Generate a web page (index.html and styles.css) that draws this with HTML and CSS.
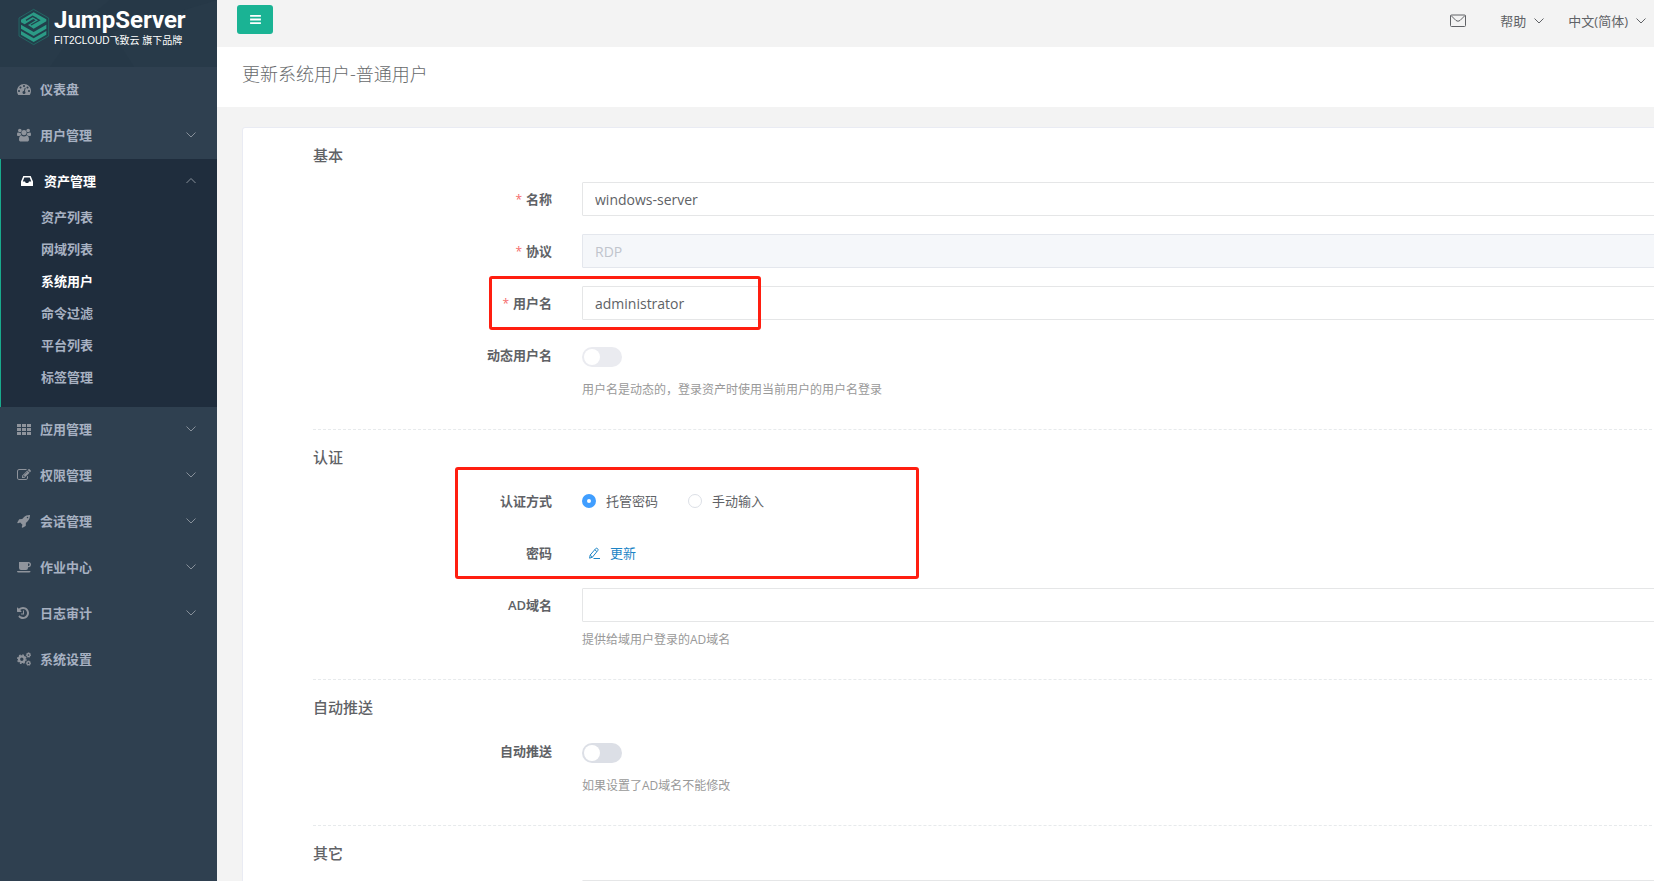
FILE: index.html
```html
<!DOCTYPE html>
<html lang="zh-CN">
<head>
<meta charset="utf-8">
<title>JumpServer</title>
<link rel="stylesheet" href="styles.css">
</head>
<body>
<svg class="defs" aria-hidden="true">
  <symbol id="down" viewBox="0 0 12 12"><path d="M1.500 3.500 6 8 10.500 3.500" fill="none" stroke="currentColor"/></symbol>
  <symbol id="up" viewBox="0 0 12 12"><path d="M1.500 8 6 3.500 10.500 8" fill="none" stroke="currentColor"/></symbol>
</svg>
<div class="app">
  <aside class="sidebar">
    <a class="brand" href="#">
      <svg class="brand-pattern" viewBox="0 0 217 67" preserveAspectRatio="none" aria-hidden="true"><path d="M0 0H110L80 24 50 67H0z" fill="#283a49"/><path d="M112 32 217 0V67H134z" fill="#283a49"/></svg>
      <svg class="brand-mark" viewBox="54 24 96 114" aria-hidden="true">
        <path d="M101 28 146 54V108L101 134 57 108V54z" fill="#223f4b" stroke="#24786f" stroke-width="2"/>
        <path d="M101 37 63 59V67L74 73 100 57 107 61 84 75 101 86 139 64V58z" fill="#2b9b86"/>
        <path d="M78 61 98 49 109 55" fill="none" stroke="#223f4b" stroke-width="4"/>
        <path d="M93 75 118 61 107 54" fill="none" stroke="#223f4b" stroke-width="4"/>
        <path d="M63 74 101 96 139 74V86L101 108 63 86z" fill="#2b9b86"/>
        <path d="M63 93 101 115 139 93V104L101 126 63 104z" fill="#2b9b86"/>
      </svg>
      <span class="brand-text"><strong class="brand-name">JumpServer</strong><span class="brand-sub">FIT2CLOUD飞致云 旗下品牌</span></span>
    </a>
    <nav class="menu">
      <a class="item" href="#"><svg class="icon" viewBox="0 0 1792 1792"><path d="M384 1152q0-53-37.500-90.500t-90.500-37.500-90.500 37.500-37.500 90.500 37.500 90.500 90.500 37.500 90.500-37.500 37.500-90.500zm192-448q0-53-37.500-90.500t-90.500-37.500-90.500 37.500-37.500 90.500 37.500 90.500 90.500 37.500 90.500-37.500 37.500-90.500zm428 481l101-382q6-26-7.500-48.500t-38.500-29.500-48 6.500-30 39.500l-101 382q-60 5-107 43.500t-63 98.500q-20 77 20 146t117 89 146-20 89-117q16-60-6-117t-72-91zm660-33q0-53-37.500-90.500t-90.500-37.500-90.500 37.500-37.500 90.500 37.500 90.500 90.500 37.500 90.500-37.500 37.500-90.500zm-640-640q0-53-37.500-90.500t-90.500-37.500-90.500 37.500-37.500 90.500 37.500 90.500 90.500 37.500 90.500-37.500 37.500-90.500zm448 192q0-53-37.500-90.500t-90.500-37.500-90.500 37.500-37.500 90.500 37.500 90.500 90.500 37.500 90.500-37.500 37.500-90.500zm320 448q0 261-141 483-19 29-54 29h-1402q-35 0-54-29-141-221-141-483 0-182 71-348t191-286 286-191 348-71 348 71 286 191 191 286 71 348z"/></svg><span class="name">仪表盘</span></a>
      <a class="item" href="#"><svg class="icon" viewBox="0 0 14 14"><circle cx="2.800" cy="2.500" r="1.800"/><circle cx="11.200" cy="2.500" r="1.800"/><circle cx="7" cy="4.600" r="2.600"/><path d="M0 6.500C0 5 .6 4.400 1.300 4.600 2.200 5.100 3 5.100 3.700 4.800 3.700 6 4 6.600 4.500 7.200 3.400 7.200 2.800 7.600 2.400 8H1.200C.4 8 0 7.500 0 6.500zM14 6.500C14 5 13.400 4.400 12.700 4.600 11.800 5.100 11 5.100 10.300 4.800 10.300 6 10 6.600 9.500 7.200 10.600 7.200 11.200 7.600 11.600 8H12.800C13.600 8 14 7.500 14 6.500zM2 11.500C2 9 3 7.500 4.500 7.500 6 8.700 8 8.700 9.500 7.500 11 7.500 12 9 12 11.500 12 13 11.200 13.500 10.200 13.500H3.800C2.800 13.500 2 13 2 11.500z"/></svg><span class="name">用户管理</span><svg class="caret"><use href="#down"/></svg></a>
      <div class="group">
        <a class="item item-open" href="#"><svg class="icon" viewBox="0 0 14 14"><path fill-rule="evenodd" d="M3.300 2H10.700L13 7.500V11.500Q13 12 12.500 12H1.500Q1 12 1 11.500V7.500zM4.300 3.500 2.800 7.500H5L5.800 9H8.200L9 7.500H11.200L9.700 3.500z"/></svg><span class="name">资产管理</span><svg class="caret"><use href="#up"/></svg></a>
        <div class="submenu">
          <a href="#">资产列表</a>
          <a href="#">网域列表</a>
          <a href="#" class="current">系统用户</a>
          <a href="#">命令过滤</a>
          <a href="#">平台列表</a>
          <a href="#">标签管理</a>
        </div>
      </div>
      <a class="item" href="#"><svg class="icon" viewBox="0 0 14 14"><path d="M0 2H4V5H0zM5 2H9V5H5zM10 2H14V5H10zM0 6H4V9H0zM5 6H9V9H5zM10 6H14V9H10zM0 10H4V13H0zM5 10H9V13H5zM10 10H14V13H10z"/></svg><span class="name">应用管理</span><svg class="caret"><use href="#down"/></svg></a>
      <a class="item" href="#"><svg class="icon" viewBox="0 0 1792 1792"><path d="M888 1184l116-116-152-152-116 116v56h96v96h56zm440-720q-16-16-33 1l-350 350q-17 17-1 33t33-1l350-350q17-17 1-33zm80 594v190q0 119-84.500 203.500t-203.500 84.500h-832q-119 0-203.500-84.500t-84.500-203.500v-832q0-119 84.500-203.500t203.500-84.500h832q63 0 117 25 15 7 18 23 3 17-9 29l-49 49q-14 14-32 8-23-6-45-6h-832q-66 0-113 47t-47 113v832q0 66 47 113t113 47h832q66 0 113-47t47-113v-126q0-13 9-22l64-64q15-15 35-7t20 29zm-96-738l288 288-672 672h-288v-288zm444 132l-92 92-288-288 92-92q28-28 68-28t68 28l152 152q28 28 28 68t-28 68z"/></svg><span class="name">权限管理</span><svg class="caret"><use href="#down"/></svg></a>
      <a class="item" href="#"><svg class="icon" viewBox="0 0 1792 1792"><path d="M1440 448q0-40-28-68t-68-28-68 28-28 68 28 68 68 28 68-28 28-68zm224-288q0 249-75.500 430.500t-253.500 360.500q-81 80-195 176l-20 379q-2 16-16 26l-384 224q-7 4-16 4-12 0-23-9l-64-64q-13-14-8-32l85-276-281-281-276 85q-3 1-9 1-14 0-23-9l-64-64q-17-19-5-39l224-384q10-14 26-16l379-20q96-114 176-195 188-187 358-258t431-71q14 0 24 9.500t10 22.500z"/></svg><span class="name">会话管理</span><svg class="caret"><use href="#down"/></svg></a>
      <a class="item" href="#"><svg class="icon" viewBox="0 0 14 14"><path fill-rule="evenodd" d="M2 2H11.500C13 2 14 3 14 4.600S13 7.300 11.500 7.300H11V8Q11 10 9 10H4Q2 10 2 8zM11 3.400V5.900H11.500C12.200 5.900 12.600 5.400 12.600 4.600S12.200 3.400 11.500 3.400zM0 11H13.500Q13.500 12.500 12 12.500H1.500Q0 12.500 0 11z"/></svg><span class="name">作业中心</span><svg class="caret"><use href="#down"/></svg></a>
      <a class="item" href="#"><svg class="icon" viewBox="128 0 1792 1792"><path d="M1664 896q0 156-61 298t-164 245-245 164-298 61q-172 0-327-72.500t-264-204.500q-7-10-6.500-22.500t8.500-20.500l137-138q10-9 25-9 16 2 23 12 73 95 179 147t225 52q104 0 198.500-40.500t163.500-109.500 109.500-163.500 40.500-198.500-40.500-198.500-109.500-163.500-163.500-109.500-198.500-40.500q-98 0-188 35.500t-160 101.500l137 138q31 30 14 69-17 40-59 40h-448q-26 0-45-19t-19-45v-448q0-42 40-59 39-17 69 14l130 129q107-101 244.500-156.500t284.500-55.500q156 0 298 61t245 164 164 245 61 298zm-640-288v448q0 14-9 23t-23 9h-320q-14 0-23-9t-9-23v-64q0-14 9-23t23-9h224v-352q0-14 9-23t23-9h64q14 0 23 9t9 23z"/></svg><span class="name">日志审计</span><svg class="caret"><use href="#down"/></svg></a>
      <a class="item" href="#"><svg class="icon" viewBox="0 0 14 14"><g fill="none" stroke="currentColor"><circle cx="4.800" cy="7.200" r="2.800" stroke-width="2.200"/><circle cx="4.800" cy="7.200" r="4.200" stroke-width="1.400" stroke-dasharray="1.700 1.600"/><circle cx="11.500" cy="3" r="1.500" stroke-width="1.300"/><circle cx="11.500" cy="3" r="2.200" stroke-width=".9" stroke-dasharray="1 .73"/><circle cx="11.500" cy="11.200" r="1.500" stroke-width="1.300"/><circle cx="11.500" cy="11.200" r="2.200" stroke-width=".9" stroke-dasharray="1 .73"/></g></svg><span class="name">系统设置</span></a>
    </nav>
  </aside>
  <div class="page">
    <header class="topbar">
      <button class="toggle" type="button" aria-label="菜单"><svg viewBox="0 0 12 10" aria-hidden="true"><path d="M0 0H12V2H0zM0 4H12V6H0zM0 8H12V10H0z"/></svg></button>
      <div class="tools">
        <button class="tool mail" type="button" aria-label="消息"><svg viewBox="0 0 18 14" aria-hidden="true"><rect x="1.500" y="1" width="15" height="11.500" rx="1" fill="none" stroke="currentColor"/><path d="M2 1.500 7 6.500Q9 8 11 6.500L16 1.500" fill="none" stroke="currentColor"/></svg></button>
        <button class="tool help-menu" type="button">帮助<svg class="drop"><use href="#down"/></svg></button>
        <button class="tool" type="button">中文(简体)<svg class="drop"><use href="#down"/></svg></button>
      </div>
    </header>
    <div class="heading"><h1>更新系统用户-普通用户</h1></div>
    <main class="content">
      <form class="card">
        <section class="section">
          <h2>基本</h2>
          <div class="row"><label class="label required" for="name">名称</label><input class="field" id="name" type="text" value="windows-server"></div>
          <div class="row"><label class="label required" for="protocol">协议</label><input class="field" id="protocol" type="text" value="RDP" disabled></div>
          <div class="row"><label class="label required" for="username">用户名</label><input class="field" id="username" type="text" value="administrator"><span class="mark mark-user"></span></div>
          <div class="row"><label class="label" for="dynamic">动态用户名</label><input class="switch" id="dynamic" type="checkbox" disabled></div>
          <p class="hint">用户名是动态的，登录资产时使用当前用户的用户名登录</p>
        </section>
        <section class="section">
          <h2>认证</h2>
          <div class="marked">
            <div class="row"><span class="label" id="mode">认证方式</span><div class="radios" role="radiogroup" aria-labelledby="mode"><label class="radio"><input type="radio" name="mode" checked>托管密码</label><label class="radio"><input type="radio" name="mode">手动输入</label></div></div>
            <div class="row"><span class="label">密码</span><a class="update" href="#"><svg viewBox="0 0 13 13" aria-hidden="true"><path d="M2.200 8 7.700 1.600Q8.500 .8 9.500 1.600 10.500 2.500 9.800 3.500L4.400 10.200 1.600 11.200zM6.800 2.700 8.900 4.600M2.200 8 4.400 10.200M5.500 11.500H12" fill="none" stroke="currentColor"/></svg>更新</a></div>
            <span class="mark mark-auth"></span>
          </div>
          <div class="row"><label class="label" for="domain">AD域名</label><input class="field" id="domain" type="text"></div>
          <p class="hint">提供给域用户登录的AD域名</p>
        </section>
        <section class="section">
          <h2>自动推送</h2>
          <div class="row"><label class="label" for="push">自动推送</label><input class="switch" id="push" type="checkbox"></div>
          <p class="hint">如果设置了AD域名不能修改</p>
        </section>
        <section class="section">
          <h2>其它</h2>
          <div class="row"><span class="label"></span><input class="field" type="text" aria-label="其它"></div>
        </section>
      </form>
    </main>
  </div>
</div>
</body>
</html>
```
FILE: styles.css
```css
* { box-sizing: border-box; }
body {
  margin: 0;
  font: 13px/20px "Open Sans", "Noto Sans CJK SC", sans-serif;
  color: #606266;
  background: #f3f3f3;
}
a { color: inherit; text-decoration: none; }
button { font: inherit; color: inherit; border: 0; padding: 0; background: none; cursor: pointer; }
.defs { display: none; }
.app { display: flex; height: 100vh; overflow: hidden; }

/* Sidebar */
.sidebar { flex: 0 0 217px; background: #2f4050; color: #a7b1c2; }
.brand { position: relative; display: flex; align-items: flex-start; gap: 4px; height: 67px; padding: 8px 0 0 18px; background: #263847; color: #fff; }
.brand-pattern { position: absolute; inset: 0; width: 100%; height: 100%; }
.brand-mark { position: relative; width: 32px; height: 38px; }
.brand-text { position: relative; display: flex; flex-direction: column; }
.brand-name { font: 700 24px/24px Roboto, sans-serif; }
.brand-sub { padding-top: 1px; font: 10px/16px "Liberation Sans", "Noto Sans CJK SC", sans-serif; white-space: nowrap; }
.item { display: flex; align-items: center; height: 46px; padding: 0 20px 2px 17px; font-weight: 600; }
.icon { flex: none; width: 14px; height: 14px; margin-right: 9px; fill: currentColor; color: #8f949c; }
.name { flex: 1; }
.caret { width: 12px; height: 12px; color: #87909a; }
.group { background: #1f2d3d; border-left: 1px solid #19aa8d; }
.group .item { height: 42px; padding: 2px 20px 0 19px; color: #fff; }
.group .icon { margin-right: 10px; color: #fff; }
.submenu { display: flex; flex-direction: column; padding-bottom: 14px; }
.submenu a { padding-left: 40px; line-height: 32px; font-weight: 600; }
.submenu .current { color: #fff; font-weight: 700; }

/* Page header */
.page { flex: 1; min-width: 0; overflow: hidden; }
.topbar { display: flex; justify-content: space-between; align-items: center; height: 47px; padding: 0 7px 8px 20px; }
.toggle { display: flex; align-items: center; justify-content: center; width: 36px; height: 29px; border-radius: 3px; background: #1ab394; }
.toggle svg { width: 11px; height: 9px; fill: #fff; }
.tools { display: flex; align-items: center; gap: 23px; padding-top: 2px; }
.tool { display: flex; align-items: center; gap: 7px; }
.mail { margin-right: 10px; }
.mail svg { width: 18px; height: 14px; }
.drop { width: 12px; height: 12px; }
.heading { height: 60px; padding: 14px 25px; background: #fff; }
h1 { margin: 0; font-size: 18px; line-height: 26px; font-weight: 300; color: #676a6c; }

/* Form */
.content { padding: 20px 0 0 25px; }
.card { margin-right: -24px; padding-left: 70px; background: #fff; border: 1px solid #e9ebf3; border-radius: 3px; }
.section { padding-bottom: 21px; border-bottom: 1px dashed #e7eaec; }
h2 { margin: 0; padding: 15px 0; font-size: 15px; line-height: 24px; font-weight: 500; }
.row { position: relative; display: grid; grid-template-columns: 239px 1fr; column-gap: 30px; align-items: center; height: 34px; margin-bottom: 18px; }
.row:has(+ .hint) { margin-bottom: 0; }
.label { text-align: right; font-weight: 600; }
.required::before { content: "*"; margin-right: 4px; color: #f56c6c; font-size: 12px; font-weight: 400; }
.field { width: 100%; height: 34px; padding: 0 12px; font: 14px/20px "Open Sans", "Noto Sans CJK SC", sans-serif; color: #606266; background: #fff; border: 1px solid #e5e6e7; border-radius: 1px; }
.field:disabled { color: #c0c4cc; background: #f5f7fa; border-color: #e4e7ed; }
.hint { margin: 0; padding-left: 269px; font-size: 12px; line-height: 36px; color: #999; }
.switch { appearance: none; width: 40px; height: 20px; margin: 4px 0 0; padding: 2px; border-radius: 10px; background: #dcdfe6; }
.switch::before { content: ""; display: block; width: 16px; height: 16px; border-radius: 50%; background: #fff; }
.switch:disabled { background: #eaebf0; }
.radios { display: flex; gap: 30px; }
.radio { display: flex; align-items: center; gap: 10px; }
.radio input { appearance: none; width: 14px; height: 14px; margin: 0; border: 1px solid #dcdfe6; border-radius: 50%; background: #fff; }
.radio input:checked { border: 5px solid #409eff; }
.update { display: flex; align-items: center; gap: 9px; padding-left: 6px; color: #1c84c6; }
.update svg { width: 13px; height: 13px; }

/* Highlight frames drawn over the form */
.marked { position: relative; }
.mark { position: absolute; border: 3px solid #ff1e10; border-radius: 3px; pointer-events: none; }
.mark-user { left: 176px; top: -10px; width: 272px; height: 54px; }
.mark-auth { left: 142px; top: -17px; width: 464px; height: 112px; }
```
